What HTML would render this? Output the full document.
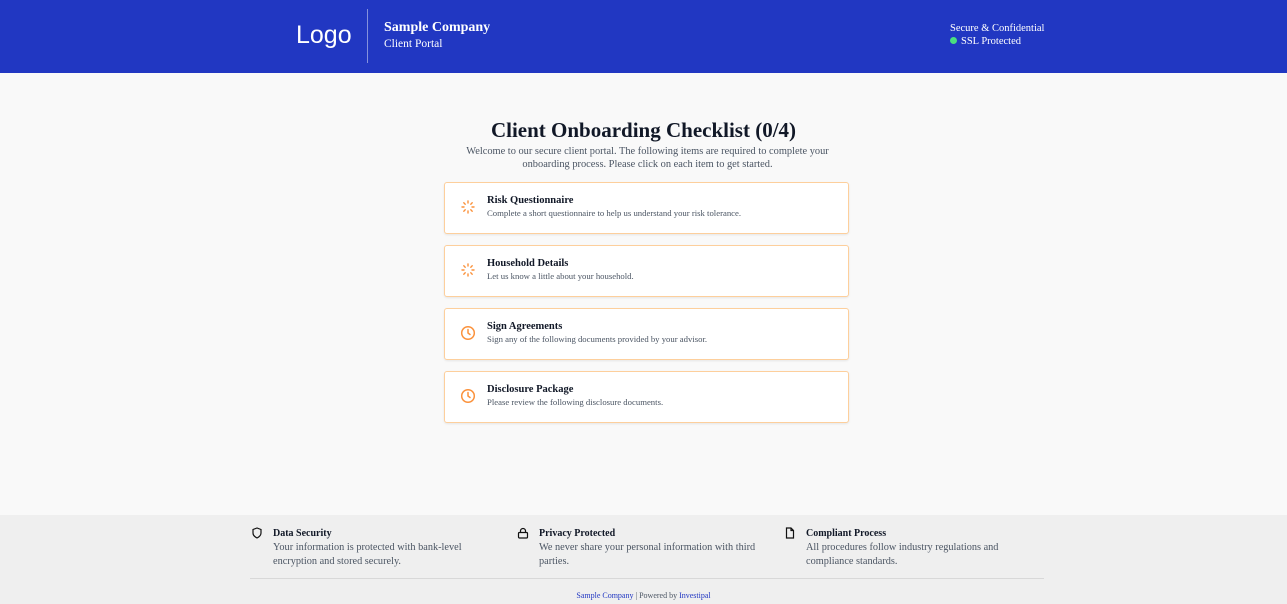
<!DOCTYPE html>
<html><head><style>
*{box-sizing:border-box;margin:0;padding:0}
body{width:1287px;height:604px;overflow:hidden;background:#f9f9f9;font-family:"Liberation Serif",serif;color:#111827;position:relative}
.hdr{position:absolute;left:0;top:0;width:1287px;height:73px;background:#2137c2;color:#fff}
.logo{position:absolute;left:296px;top:21px;font-family:"Liberation Sans",sans-serif;font-size:25px}
.sep{position:absolute;left:367px;top:9px;width:1px;height:54px;background:rgba(255,255,255,.45)}
.co{position:absolute;left:384px;top:20px;font-weight:bold;font-size:14px}
.cp{position:absolute;left:384px;top:38px;font-size:11.5px}
.sec{position:absolute;left:950px;top:23px;font-size:10.5px}
.ssl{position:absolute;left:950px;top:36px;font-size:10.5px}
.ssl i{display:inline-block;width:7px;height:7px;border-radius:50%;background:#4ade80;margin-right:4px}
h1{position:absolute;left:0;width:1287px;top:118px;text-align:center;font-size:21px;font-weight:bold}
.intro{position:absolute;left:455px;width:385px;top:145px;text-align:center;font-size:10.4px;line-height:13px;color:#4b5563}
.card{position:absolute;left:444px;width:405px;height:52px;background:#fff;border:1.5px solid #fdcf9c;border-radius:3px;box-shadow:0 1px 2px rgba(0,0,0,.08)}
.card svg{position:absolute;left:15px;top:16px}
.card b{position:absolute;left:42px;top:12px;font-size:10.5px}
.card span{position:absolute;left:42px;top:25px;font-size:8.7px;color:#4b5563}
.ftr{position:absolute;left:0;top:515px;width:1287px;height:89px;background:#efefef}
.f{position:absolute;top:12px;font-size:10.3px;line-height:14px;color:#4b5563}
.f b{color:#111827;font-size:10px}
.f svg{position:absolute;left:-22px;top:0}
.hr{position:absolute;left:250px;width:794px;top:63px;height:1px;background:#d8d8d8}
.pw{position:absolute;left:0;width:1287px;top:76px;text-align:center;font-size:8px;color:#4b5563}
.pw a{color:#2137c2;text-decoration:none}
</style></head><body>
<div class="hdr"><div class="logo">Logo</div><div class="sep"></div><div class="co">Sample Company</div><div class="cp">Client Portal</div>
<div class="sec">Secure &amp; Confidential</div><div class="ssl"><i></i>SSL Protected</div></div>
<h1>Client Onboarding Checklist (0/4)</h1>
<div class="intro">Welcome to our secure client portal. The following items are required to complete your onboarding process. Please click on each item to get started.</div>
<div class="card" style="top:182px"><svg width="16" height="16" viewBox="0 0 16 16" stroke="#fb923c" stroke-width="1.4" stroke-linecap="round"><path d="M8 2v2M8 12v2M2 8h2M12 8h2M3.8 3.8l1.4 1.4M10.8 10.8l1.4 1.4M3.8 12.2l1.4-1.4M10.8 5.2l1.4-1.4"/></svg><b>Risk Questionnaire</b><span>Complete a short questionnaire to help us understand your risk tolerance.</span></div>
<div class="card" style="top:245px"><svg width="16" height="16" viewBox="0 0 16 16" stroke="#fb923c" stroke-width="1.4" stroke-linecap="round"><path d="M8 2v2M8 12v2M2 8h2M12 8h2M3.8 3.8l1.4 1.4M10.8 10.8l1.4 1.4M3.8 12.2l1.4-1.4M10.8 5.2l1.4-1.4"/></svg><b>Household Details</b><span>Let us know a little about your household.</span></div>
<div class="card" style="top:308px"><svg width="16" height="16" viewBox="0 0 16 16" fill="none" stroke="#fb923c" stroke-width="1.5" stroke-linecap="round"><circle cx="8" cy="8" r="6.3"/><path d="M8 4.5V8l2 1.5"/></svg><b>Sign Agreements</b><span>Sign any of the following documents provided by your advisor.</span></div>
<div class="card" style="top:371px"><svg width="16" height="16" viewBox="0 0 16 16" fill="none" stroke="#fb923c" stroke-width="1.5" stroke-linecap="round"><circle cx="8" cy="8" r="6.3"/><path d="M8 4.5V8l2 1.5"/></svg><b>Disclosure Package</b><span>Please review the following disclosure documents.</span></div>
<div class="ftr">
<div class="f" style="left:273px"><svg width="12" height="12" viewBox="0 0 12 12" fill="none" stroke="#111" stroke-width="1.2"><path d="M6 1L2 2.5v3.5c0 2.5 2 4 4 5 2-1 4-2.5 4-5V2.5z"/></svg><b>Data Security</b><br>Your information is protected with bank-level<br>encryption and stored securely.</div>
<div class="f" style="left:539px"><svg width="12" height="12" viewBox="0 0 12 12" fill="none" stroke="#111" stroke-width="1.2"><rect x="1.5" y="5.5" width="9" height="5.5" rx="1"/><path d="M3.5 5.5V4a2.5 2.5 0 015 0v1.5"/></svg><b>Privacy Protected</b><br>We never share your personal information with third<br>parties.</div>
<div class="f" style="left:806px"><svg width="12" height="12" viewBox="0 0 12 12" fill="none" stroke="#111" stroke-width="1.2"><path d="M2.5 1h4.5l2.5 2.5V11h-7z M7 1v2.5h2.5"/></svg><b>Compliant Process</b><br>All procedures follow industry regulations and<br>compliance standards.</div>
<div class="hr"></div>
<div class="pw"><a>Sample Company</a> | Powered by <a>Investipal</a></div>
</div>
</body></html>
